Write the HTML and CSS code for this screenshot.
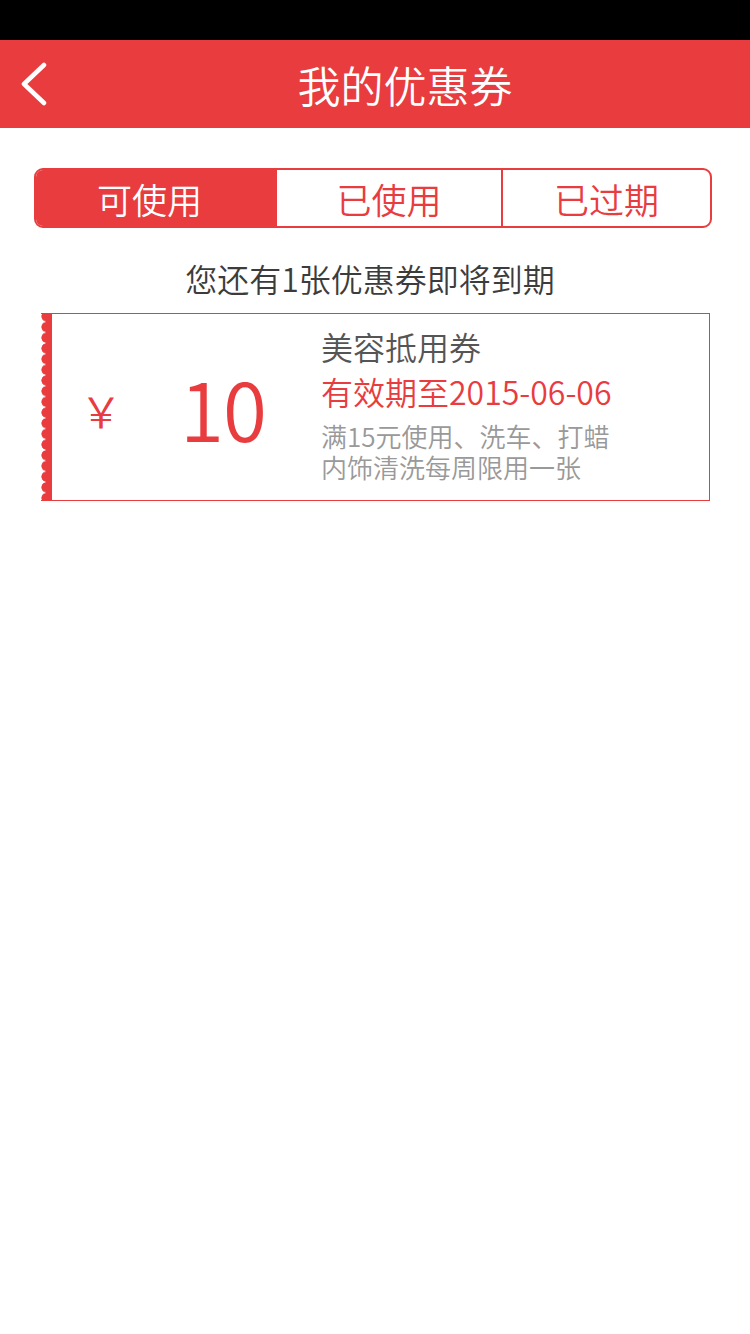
FILE: index.html
```html
<!DOCTYPE html>
<html lang="zh-CN">
<head>
<meta charset="utf-8">
<title>我的优惠券</title>
<link rel="stylesheet" href="styles.css">
</head>
<body>
<div class="statusbar"></div>
<header class="header">
  <div class="back">
    <svg width="30" height="44" viewBox="0 0 30 44"><polyline points="24,3 4,22 24,41" fill="none" stroke="#fff" stroke-width="4.5" stroke-linecap="round" stroke-linejoin="round"/></svg>
  </div>
  <h1 class="title">我的优惠券</h1>
</header>
<main class="content">
  <nav class="tabs">
    <div class="tab active">可使用</div>
    <div class="tab">已使用</div>
    <div class="tab">已过期</div>
  </nav>
  <p class="notice">您还有1张优惠券即将到期</p>
  <div class="coupon">
    <div class="edge"></div>
    <div class="price">
      <span class="yen">￥</span>
      <span class="amount">10</span>
    </div>
    <div class="info">
      <div class="name">美容抵用券</div>
      <div class="date">有效期至2015-06-06</div>
      <div class="desc">满15元使用、洗车、打蜡</div>
      <div class="desc">内饰清洗每周限用一张</div>
    </div>
  </div>
</main>
</body>
</html>
```
FILE: styles.css
```css
* { box-sizing: border-box; }
html, body { margin: 0; padding: 0; background: #fff; }
body {
  width: 750px;
  min-height: 1334px;
  font-family: "Noto Sans CJK SC", "Noto Sans", sans-serif;
  font-weight: 350;
}
.statusbar { height: 40px; background: #000; }
.header {
  height: 88px;
  background: #e83c3f;
  display: flex;
  align-items: center;
}
.back {
  width: 60px;
  height: 88px;
  display: flex;
  align-items: center;
  padding-left: 20px;
}
.back svg { display: block; }
.title {
  flex: 1;
  margin: 0;
  text-align: center;
  color: #fff;
  font-weight: 350;
  font-size: 43px;
  line-height: 88px;
}
.content { padding: 40px 38px 0 34px; }
.tabs {
  display: grid;
  grid-template-columns: 239px 226px 1fr;
  height: 60px;
  border: 2px solid #e83c3f;
  border-radius: 9px;
  overflow: hidden;
}
.tab {
  display: flex;
  align-items: center;
  justify-content: center;
  font-size: 35px;
  color: #e83c3f;
  border-left: 2px solid #e83c3f;
}
.tab:first-child { border-left: none; padding-right: 12px; }
.tab.active { background: #e83c3f; color: #fff; }
.notice {
  margin: 30px 0 0;
  text-align: center;
  font-size: 32px;
  line-height: 40px;
  color: #3c3c3c;
  padding-right: 6px;
}
.coupon {
  margin: 15px 0 0 7px;
  width: 669px;
  height: 188px;
  display: flex;
  border: 1px solid #e83c3f;
  border-left: none;
}
.edge {
  width: 11px;
  margin-top: -1px;
  margin-bottom: -1px;
  background:
    linear-gradient(#e83c3f, #e83c3f) right top / 6px 100% no-repeat,
    radial-gradient(circle at 5.5px 50%, #e83c3f 4.8px, transparent 5.4px) left 0 top -2px / 11px 10.7px repeat-y;
}
.price {
  width: 269px;
  display: flex;
  align-items: center;
  padding-left: 28px;
  color: #e83c3f;
}
.yen { width: 100px; font-size: 42px; line-height: 1; padding-top: 6px; }
.amount { font-size: 80px; line-height: 1; letter-spacing: -1px; }
.info { padding-top: 10px; }
.name { font-size: 32px; line-height: 44px; color: #555; }
.date { font-size: 32px; line-height: 46px; color: #e83c3f; margin-bottom: 6px; }
.desc { font-size: 26px; line-height: 31px; color: #999; }
```
